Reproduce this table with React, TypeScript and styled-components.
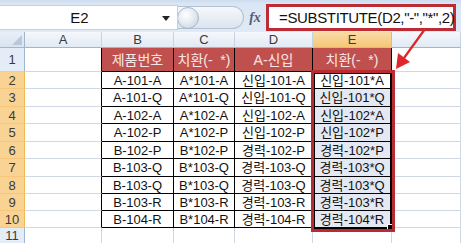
import React from "react";
import styled, { createGlobalStyle } from "styled-components";

const GlobalStyle = createGlobalStyle`
  html, body {
    margin: 0;
    padding: 0;
    background: #ffffff;
    overflow: hidden;
  }
`;

const FONT = `"Liberation Sans", "Noto Sans CJK KR", sans-serif`;

const Root = styled.div`
  position: relative;
  width: 461px;
  height: 243px;
  overflow: hidden;
  background: #ffffff;
  font-family: ${FONT};
`;

const FormulaBar = styled.div`
  display: flex;
  align-items: center;
  height: 32px;
  background: linear-gradient(#cddcef 0px, #dbe6f4 4px, #e0eaf6 100%);
`;

const NameBox = styled.div`
  position: relative;
  display: flex;
  align-items: center;
  justify-content: center;
  box-sizing: border-box;
  width: 178px;
  height: 25px;
  margin-top: 3px;
  padding-right: 18px;
  background: #ffffff;
  border: 1px solid #c3d1e2;
  border-left: none;
  font-size: 15px;
  color: #111;
`;

const DropArrow = styled.span`
  position: absolute;
  right: 7px;
  top: 10px;
  width: 0;
  height: 0;
  border-left: 4px solid transparent;
  border-right: 4px solid transparent;
  border-top: 5px solid #222;
`;

const Capsule = styled.div`
  display: flex;
  align-items: center;
  box-sizing: border-box;
  width: 66px;
  height: 23px;
  margin-top: 3px;
  border: 1px solid #b3c2d4;
  border-left: none;
  border-radius: 0 12px 12px 0;
  background: linear-gradient(#f6f8fb, #dce4ee);
`;

const Knob = styled.div`
  width: 22px;
  height: 22px;
  margin-left: -1px;
  border-radius: 50%;
  border: 1px solid #a7b8cc;
  box-sizing: border-box;
  background: radial-gradient(circle at 40% 35%, #ffffff 0%, #e6ecf3 45%, #c0ccdb 100%);
`;

const FxLabel = styled.div`
  width: 22px;
  margin-top: 3px;
  text-align: center;
  font-family: "Liberation Serif", serif;
  font-style: italic;
  font-weight: bold;
  font-size: 14px;
  color: #4e5f78;
`;

const FormulaInput = styled.div`
  display: flex;
  align-items: center;
  box-sizing: border-box;
  width: 190px;
  height: 27px;
  margin-top: 2px;
  padding-left: 10px;
  background: #ffffff;
  border: 3px solid #bd2b35;
  font-size: 15px;
  letter-spacing: -0.35px;
  color: #111;
  white-space: pre;
`;

const Sheet = styled.div`
  display: grid;
  grid-template-columns: 25px 77px 72px 61px 78px 79px 1fr;
  grid-template-rows: 16px 24px 17px 18px 17px 18px 17px 18px 17px 17px 17px 1fr;
  height: 211px;
`;

const Corner = styled.div`
  position: relative;
  box-sizing: border-box;
  background: linear-gradient(#e9eff8, #d9e3f0);
  border-right: 1px solid #9eb6ce;
  border-bottom: 1px solid #9eb6ce;

  &::after {
    content: "";
    position: absolute;
    right: 2px;
    bottom: 2px;
    width: 0;
    height: 0;
    border-left: 10px solid transparent;
    border-bottom: 10px solid #b7c8dc;
  }
`;

const ColHead = styled.div<{ $sel?: boolean }>`
  display: flex;
  align-items: center;
  justify-content: center;
  box-sizing: border-box;
  font-size: 13px;
  color: #3a3a3a;
  background: ${({ $sel }) =>
    $sel
      ? "linear-gradient(#f9dca6, #f4c778)"
      : "linear-gradient(#f5f8fc, #e1e9f4)"};
  border-right: 1px solid ${({ $sel }) => ($sel ? "#f2b950" : "#c5d3e3")};
  border-bottom: 1px solid ${({ $sel }) => ($sel ? "#f2b950" : "#9eb6ce")};
`;

const RowHead = styled.div<{ $sel?: boolean }>`
  display: flex;
  align-items: center;
  justify-content: center;
  box-sizing: border-box;
  font-size: 13px;
  color: #3a3a3a;
  background: ${({ $sel }) => ($sel ? "#f8d394" : "#e4ecf7")};
  border-right: 1px solid ${({ $sel }) => ($sel ? "#f2b950" : "#9eb6ce")};
  border-bottom: 1px solid ${({ $sel }) => ($sel ? "#f4c77a" : "#c5d3e3")};
`;

type Tone = "plain" | "head" | "sel" | "active";

const Cell = styled.div<{ $tone: Tone; $boxed?: boolean; $edge?: boolean }>`
  display: flex;
  align-items: center;
  justify-content: center;
  box-sizing: border-box;
  overflow: hidden;
  white-space: pre;
  line-height: 1;
  font-size: ${({ $tone }) => ($tone === "head" ? "14px" : "13px")};
  color: ${({ $tone }) => ($tone === "head" ? "#f8e6e5" : "#111")};
  background: ${({ $tone }) =>
    $tone === "head" ? "#c0504d" : $tone === "sel" ? "#e3e8f2" : "#ffffff"};
  border-right: 1px solid
    ${({ $boxed, $edge }) => ($boxed || $edge ? "#000" : "#d0d7e5")};
  border-bottom: 1px solid ${({ $boxed }) => ($boxed ? "#000" : "#d0d7e5")};
`;

const RedFrame = styled.div`
  position: absolute;
  left: 311px;
  top: 70px;
  width: 84px;
  height: 162px;
  box-sizing: border-box;
  border: 3px solid #b92a33;
  pointer-events: none;
`;

const Selection = styled.div`
  position: absolute;
  left: 313px;
  top: 72px;
  width: 79px;
  height: 157px;
  box-sizing: border-box;
  border: 2px solid #000;
  pointer-events: none;

  &::after {
    content: "";
    position: absolute;
    right: -4px;
    bottom: -4px;
    width: 5px;
    height: 5px;
    background: #000;
    border: 1px solid #fff;
  }
`;

const Arrow = styled.svg`
  position: absolute;
  left: 0;
  top: 0;
  pointer-events: none;
`;

// F is wide enough that its letter falls outside the window
const cols = ["A", "B", "C", "D", "E", ""];

const header = ["제품번호", "치환(-  *)", "A-신입", "치환(-  *)"];

const rows: string[][] = [
  ["A-101-A", "A*101-A", "신입-101-A", "신입-101*A"],
  ["A-101-Q", "A*101-Q", "신입-101-Q", "신입-101*Q"],
  ["A-102-A", "A*102-A", "신입-102-A", "신입-102*A"],
  ["A-102-P", "A*102-P", "신입-102-P", "신입-102*P"],
  ["B-102-P", "B*102-P", "경력-102-P", "경력-102*P"],
  ["B-103-Q", "B*103-Q", "경력-103-Q", "경력-103*Q"],
  ["B-103-Q", "B*103-Q", "경력-103-Q", "경력-103*Q"],
  ["B-103-R", "B*103-R", "경력-103-R", "경력-103*R"],
  ["B-104-R", "B*104-R", "경력-104-R", "경력-104*R"],
];

export default function App() {
  return (
    <>
      <GlobalStyle />
      <Root>
        <FormulaBar>
          <NameBox>
            E2
            <DropArrow />
          </NameBox>
          <Capsule>
            <Knob />
          </Capsule>
          <FxLabel>fx</FxLabel>
          <FormulaInput>{'=SUBSTITUTE(D2,"-","*",2)'}</FormulaInput>
        </FormulaBar>

        <Sheet>
          <Corner />
          {cols.map((c, i) => (
            <ColHead key={i} $sel={c === "E"}>
              {c}
            </ColHead>
          ))}

          <RowHead>1</RowHead>
          <Cell $tone="plain" $edge />
          {header.map((h, i) => (
            <Cell key={i} $tone="head" $boxed>
              {h}
            </Cell>
          ))}
          <Cell $tone="plain" />

          {rows.map((r, ri) => (
            <React.Fragment key={ri}>
              <RowHead $sel>{ri + 2}</RowHead>
              <Cell $tone="plain" $edge />
              {r.map((v, ci) => (
                <Cell
                  key={ci}
                  $tone={ci === 3 ? (ri === 0 ? "active" : "sel") : "plain"}
                  $boxed
                >
                  {v}
                </Cell>
              ))}
              <Cell $tone="plain" />
            </React.Fragment>
          ))}

          <RowHead>11</RowHead>
          {cols.map((c, i) => (
            <Cell key={i} $tone="plain" />
          ))}
        </Sheet>

        <Selection />
        <RedFrame />

        <Arrow width="461" height="243" viewBox="0 0 461 243">
          <line x1="425" y1="29" x2="404" y2="58" stroke="#d8262a" strokeWidth="2.2" />
          <polygon points="396,69 398,53 410,62" fill="#e0262a" />
        </Arrow>
      </Root>
    </>
  );
}
